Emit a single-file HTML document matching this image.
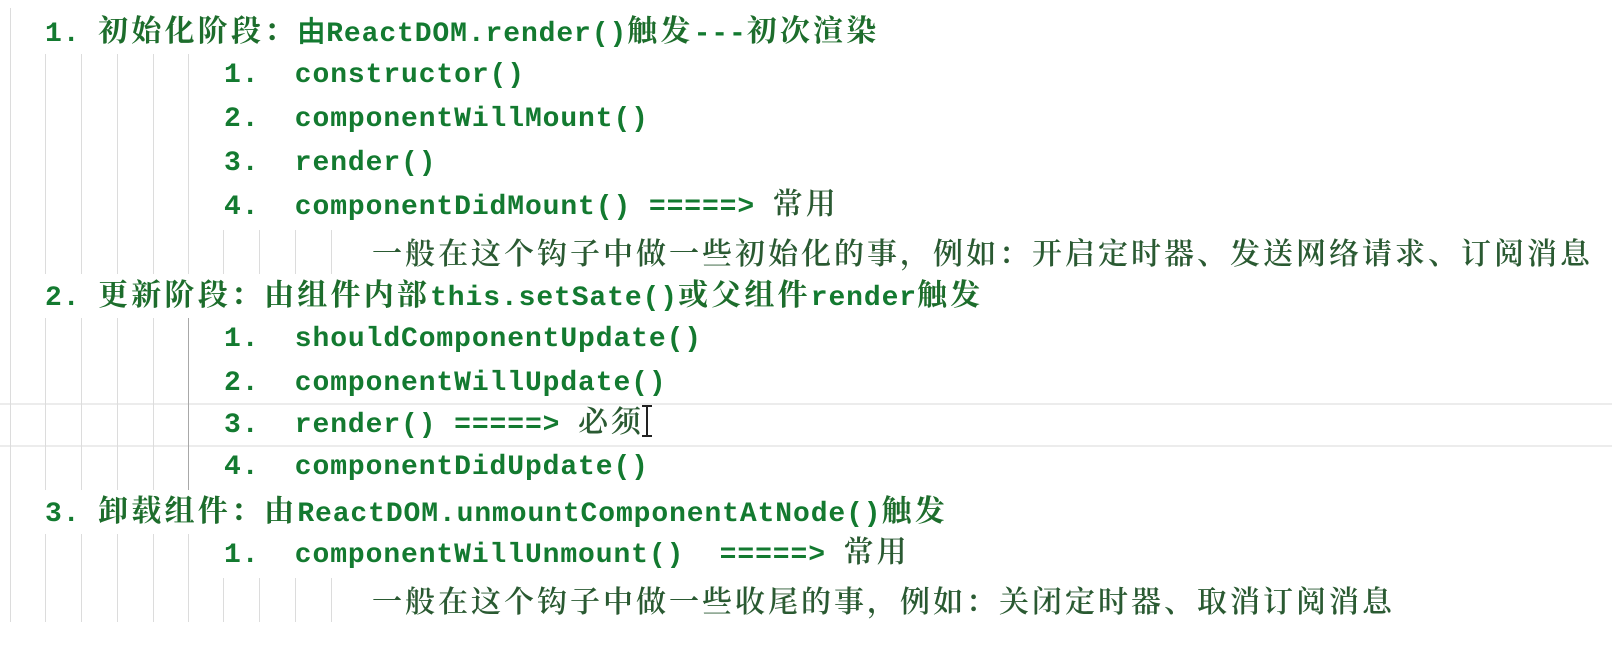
<!DOCTYPE html>
<html><head><meta charset="utf-8"><style>
html,body{margin:0;padding:0;background:#fff;width:1612px;height:660px;overflow:hidden;position:relative}
.row{position:absolute;left:0;width:1612px;height:44px}
.g{position:absolute;top:0;height:44px;width:1px;background:#dcdcdc}
.g.d{background:#a8a8a8}
.t{position:absolute;top:0;line-height:44px;height:44px;white-space:pre;color:#137a30;font-family:"Liberation Mono",monospace;font-weight:bold;font-size:28px;letter-spacing:0.9px}
.t.h{top:3px}
.t span{line-height:1;vertical-align:baseline}
.z{font-family:"Noto Serif CJK SC","Liberation Serif",serif;font-weight:700;font-size:30px;letter-spacing:3.2px;color:#1d6d2c}
.dz{font-family:"Noto Serif CJK SC","Liberation Serif",serif;font-weight:600;font-size:30px;letter-spacing:3px;color:#2a5a32}
.t.dz{line-height:44px;top:-1px}
.hl{position:absolute;left:0;width:1612px;height:2px;background:#ececec}
</style></head><body>
<div class="hl" style="top:403px"></div>
<div class="hl" style="top:445px"></div>

<div class="row" style="top:10px"><div class="g" style="left:10px;top:-2px;height:46px"></div>
<div class="t h" style="left:45px">1. <span class="z">初始化阶段：</span>由ReactDOM.render()<span class="z">触发</span>---<span class="z">初次渲染</span></div></div>

<div class="row" style="top:54px"><div class="g" style="left:10px"></div><div class="g" style="left:45px"></div><div class="g" style="left:81px"></div><div class="g" style="left:117px"></div><div class="g" style="left:153px"></div><div class="g" style="left:188px"></div>
<div class="t" style="left:224px">1.  constructor()</div></div>
<div class="row" style="top:98px"><div class="g" style="left:10px"></div><div class="g" style="left:45px"></div><div class="g" style="left:81px"></div><div class="g" style="left:117px"></div><div class="g" style="left:153px"></div><div class="g" style="left:188px"></div>
<div class="t" style="left:224px">2.  componentWillMount()</div></div>
<div class="row" style="top:142px"><div class="g" style="left:10px"></div><div class="g" style="left:45px"></div><div class="g" style="left:81px"></div><div class="g" style="left:117px"></div><div class="g" style="left:153px"></div><div class="g" style="left:188px"></div>
<div class="t" style="left:224px">3.  render()</div></div>
<div class="row" style="top:186px"><div class="g" style="left:10px"></div><div class="g" style="left:45px"></div><div class="g" style="left:81px"></div><div class="g" style="left:117px"></div><div class="g" style="left:153px"></div><div class="g" style="left:188px"></div>
<div class="t" style="left:224px">4.  componentDidMount() =====&gt; <span class="dz">常用</span></div></div>
<div class="row" style="top:230px"><div class="g" style="left:10px"></div><div class="g" style="left:45px"></div><div class="g" style="left:81px"></div><div class="g" style="left:117px"></div><div class="g" style="left:153px"></div><div class="g" style="left:188px"></div><div class="g" style="left:223px"></div><div class="g" style="left:259px"></div><div class="g" style="left:295px"></div><div class="g" style="left:331px"></div>
<div class="t dz" style="left:372px">一般在这个钩子中做一些初始化的事，例如：开启定时器、发送网络请求、订阅消息</div></div>

<div class="row" style="top:274px"><div class="g" style="left:10px"></div>
<div class="t h" style="left:45px">2. <span class="z">更新阶段：由组件内部</span>this.setSate()<span class="z">或父组件</span>render<span class="z">触发</span></div></div>
<div class="row" style="top:318px"><div class="g" style="left:10px"></div><div class="g" style="left:45px"></div><div class="g" style="left:81px"></div><div class="g" style="left:117px"></div><div class="g" style="left:153px"></div><div class="g d" style="left:188px"></div>
<div class="t" style="left:224px">1.  shouldComponentUpdate()</div></div>
<div class="row" style="top:362px"><div class="g" style="left:10px"></div><div class="g" style="left:45px"></div><div class="g" style="left:81px"></div><div class="g" style="left:117px"></div><div class="g" style="left:153px"></div><div class="g d" style="left:188px"></div>
<div class="t" style="left:224px">2.  componentWillUpdate()</div></div>
<div class="row" style="top:404px"><div class="g" style="left:10px"></div><div class="g" style="left:45px"></div><div class="g" style="left:81px"></div><div class="g" style="left:117px"></div><div class="g" style="left:153px"></div><div class="g d" style="left:188px"></div>
<div class="t" style="left:224px">3.  render() =====&gt; <span class="dz">必须</span></div>
<div style="position:absolute;left:646px;top:2px;width:2px;height:30px;background:#222"></div>
<div style="position:absolute;left:642px;top:1px;width:10px;height:2px;background:#222"></div>
<div style="position:absolute;left:642px;top:31px;width:10px;height:2px;background:#222"></div></div>
<div class="row" style="top:446px"><div class="g" style="left:10px"></div><div class="g" style="left:45px"></div><div class="g" style="left:81px"></div><div class="g" style="left:117px"></div><div class="g" style="left:153px"></div><div class="g d" style="left:188px"></div>
<div class="t" style="left:224px">4.  componentDidUpdate()</div></div>

<div class="row" style="top:490px"><div class="g" style="left:10px"></div>
<div class="t h" style="left:45px">3. <span class="z">卸载组件：由</span>ReactDOM.unmountComponentAtNode()<span class="z">触发</span></div></div>
<div class="row" style="top:534px"><div class="g" style="left:10px"></div><div class="g" style="left:45px"></div><div class="g" style="left:81px"></div><div class="g" style="left:117px"></div><div class="g" style="left:153px"></div><div class="g" style="left:188px"></div>
<div class="t" style="left:224px">1.  componentWillUnmount()  =====&gt; <span class="dz">常用</span></div></div>
<div class="row" style="top:578px"><div class="g" style="left:10px"></div><div class="g" style="left:45px"></div><div class="g" style="left:81px"></div><div class="g" style="left:117px"></div><div class="g" style="left:153px"></div><div class="g" style="left:188px"></div><div class="g" style="left:223px"></div><div class="g" style="left:259px"></div><div class="g" style="left:295px"></div><div class="g" style="left:331px"></div>
<div class="t dz" style="left:372px">一般在这个钩子中做一些收尾的事，例如：关闭定时器、取消订阅消息</div></div>
</body></html>
